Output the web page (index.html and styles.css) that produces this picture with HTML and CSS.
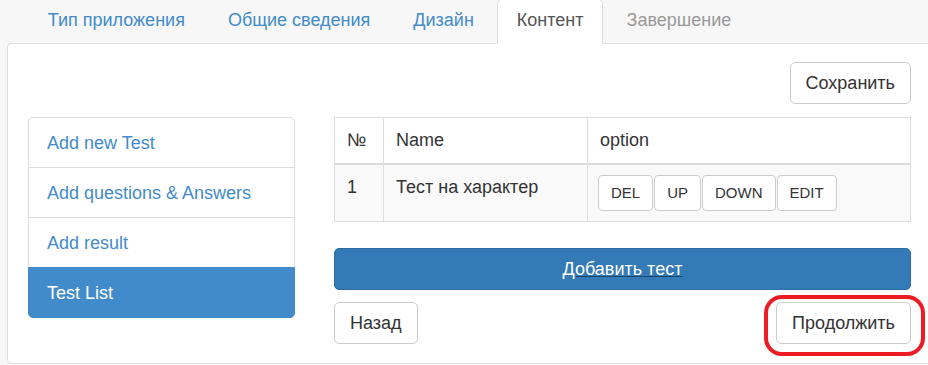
FILE: index.html
```html
<!DOCTYPE html>
<html lang="ru">
<head>
    <meta charset="UTF-8">
    <title>Контент</title>
    <link rel="stylesheet" href="styles.css">
</head>
<body>

    <ul class="tabs">
        <li><a href="#">Тип приложения</a></li>
        <li><a href="#">Общие сведения</a></li>
        <li><a href="#">Дизайн</a></li>
        <li class="active"><a href="#">Контент</a></li>
        <li class="disabled"><a href="#">Завершение</a></li>
    </ul>

    <div class="panel">
        <div class="toolbar">
            <button class="btn">Сохранить</button>
        </div>

        <div class="row">
            <div class="side">
                <div class="list-group">
                    <a href="#" class="list-item">Add new Test</a>
                    <a href="#" class="list-item">Add questions &amp; Answers</a>
                    <a href="#" class="list-item">Add result</a>
                    <a href="#" class="list-item active">Test List</a>
                </div>
            </div>

            <div class="main">
                <table class="tests">
                    <thead>
                        <tr>
                            <th class="col-num">№</th>
                            <th class="col-name">Name</th>
                            <th>option</th>
                        </tr>
                    </thead>
                    <tbody>
                        <tr>
                            <td>1</td>
                            <td>Тест на характер</td>
                            <td>
                                <div class="actions">
                                    <button class="btn btn-sm">DEL</button>
                                    <button class="btn btn-sm">UP</button>
                                    <button class="btn btn-sm">DOWN</button>
                                    <button class="btn btn-sm">EDIT</button>
                                </div>
                            </td>
                        </tr>
                    </tbody>
                </table>

                <button class="btn btn-primary btn-block"><span class="focused">Добавить тест</span></button>

                <div class="pager">
                    <button class="btn">Назад</button>
                    <span class="marked"><button class="btn">Продолжить</button></span>
                </div>
            </div>
        </div>
    </div>

</body>
</html>
```

FILE: styles.css
```css
html, body {
    overflow: hidden;
}
body {
    margin: 0;
    background-color: #f7f7f7;
    font-family: 'Liberation Sans', Arial, sans-serif;
    font-size: 18px;
    line-height: 25px;
    color: #333;
}
a {
    color: #428bca;
    text-decoration: none;
}

/* tabs */
.tabs {
    list-style: none;
    display: flex;
    margin: -1px 0 -1px 0;
    padding: 0 0 0 28px;
    position: relative;
    z-index: 1;
}
.tabs li {
    margin-right: 3.5px;
}
.tabs a {
    display: block;
    padding: 8px 18.75px 10px;
    border: 1px solid transparent;
    border-radius: 5px 5px 0 0;
}
.tabs .active a {
    color: #555;
    background-color: #fff;
    border-color: #ddd #ddd transparent;
}
.tabs .disabled a {
    color: #999;
}

/* panel */
.panel {
    box-sizing: border-box;
    width: 925px;
    margin-left: 7px;
    background-color: #fff;
    border: 1px solid #ddd;
    border-radius: 4px 0 0 4px;
    padding: 18px 20px 19px;
}
.toolbar {
    display: flex;
    justify-content: flex-end;
    margin-bottom: 13px;
}
.row {
    display: flex;
    gap: 39px;
    align-items: flex-start;
}
.side {
    width: 267px;
    flex-shrink: 0;
}
.main {
    flex: 1;
}

/* buttons */
.btn {
    font-family: inherit;
    font-size: 18px;
    line-height: 25px;
    color: #333;
    background-color: #fff;
    border: 1px solid #ccc;
    border-radius: 5px;
    padding: 7.5px 15px;
    cursor: pointer;
}
.btn-sm {
    font-size: 15px;
    line-height: 22px;
    padding: 6px 12px;
    border-radius: 4px;
}
.btn-primary {
    color: #fff;
    background-color: #337ab7;
    border-color: #2e6da4;
}
.btn-block {
    display: block;
    width: 100%;
}
.focused {
    text-decoration: underline;
    text-decoration-color: #17466f;
}

/* list */
.list-group {
    display: flex;
    flex-direction: column;
}
.list-item {
    display: block;
    padding: 12.5px 18px 11.5px;
    border: 1px solid #ddd;
    margin-bottom: -1px;
    background-color: #fff;
}
.list-item:first-child {
    border-radius: 5px 5px 0 0;
}
.list-item:last-child {
    margin-bottom: 0;
    border-radius: 0 0 5px 5px;
}
.list-item.active {
    color: #fff;
    background-color: #428bca;
    border-color: #428bca;
}

/* table */
.tests {
    width: 100%;
    border-collapse: collapse;
    margin-bottom: 26px;
}
.tests th, .tests td {
    border: 1px solid #ddd;
    padding: 10px 12px;
    text-align: left;
    vertical-align: top;
    font-weight: normal;
}
.tests th {
    border-bottom-width: 2px;
}
.tests .col-num {
    width: 24px;
}
.tests .col-name {
    width: 179px;
}
.tests tbody tr {
    background-color: #f9f9f9;
}
.tests td:last-child {
    padding-left: 10px;
}
.actions {
    display: flex;
    gap: 1px;
}

/* bottom buttons */
.pager {
    display: flex;
    justify-content: space-between;
    margin-top: 12px;
}
.marked {
    position: relative;
    display: block;
}
.marked .btn {
    display: block;
}
.marked::after {
    content: '';
    position: absolute;
    top: -7px;
    left: -12px;
    right: -14px;
    bottom: -12px;
    border: 4px solid #ed1c24;
    border-radius: 18px;
    pointer-events: none;
}
```
